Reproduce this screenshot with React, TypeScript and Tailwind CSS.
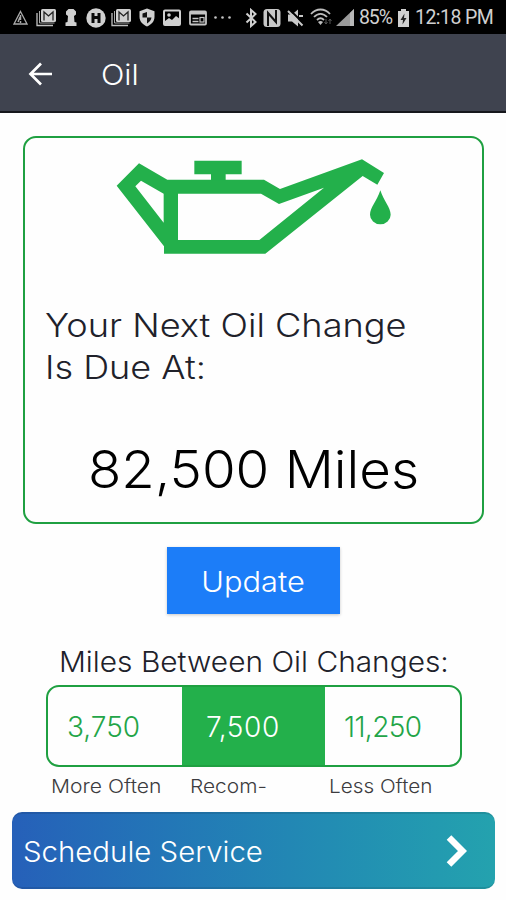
import type { ReactNode } from "react";

function StatusIcon({ width, className, children }: { width: number; className: string; children: ReactNode }) {
  return (
    <svg
      width={width}
      height="20"
      viewBox={`0 0 ${width} 20`}
      fill="none"
      stroke="none"
      className={`shrink-0 ${className}`}
      aria-hidden="true"
    >
      {children}
    </svg>
  );
}

function MailStack({ className }: { className: string }) {
  return (
    <StatusIcon width={20} className={className}>
      <path d="M1 5v12.5h16" stroke="#c0c0c0" strokeWidth="1.3" />
      <path d="M3.500 3v12h15" stroke="#a8a8a8" strokeWidth="1" />
      <rect x="5" y="1" width="15" height="13" rx="1.5" fill="#d0d0d0" />
      <path d="M8 12.500V4l4.500 4L17 4v8.500" stroke="#222" strokeWidth="1.3" />
    </StatusIcon>
  );
}

function StatusBar() {
  return (
    <div className="flex h-[34px] items-center bg-black pt-px text-[#d0d0d0]">
      <StatusIcon width={15} className="ml-[13px]">
        <path d="M7.5 3.5 14 16H1Z" stroke="#aaa" strokeWidth="1.3" />
        <path d="M7.5 7v5M7.5 13v2M5 14l2-5" stroke="#aaa" strokeWidth="1.5" />
      </StatusIcon>
      <MailStack className="ml-[8px]" />
      <StatusIcon width={12} className="ml-[9px]">
        <path d="M3.5 1h5L11 3.500V6.500L9 8l.5 6 2 .5V18H.5v-3.500l2-.5L3 8 1 6.500v-3Z" fill="#d0d0d0" />
      </StatusIcon>
      <StatusIcon width={20} className="ml-[9px]">
        <circle cx="10" cy="10" r="9.7" fill="#d0d0d0" />
        <path d="M7 5v10M13 5v10M7 9.5h6" stroke="#0a0a0a" strokeWidth="3" />
      </StatusIcon>
      <MailStack className="ml-[5px]" />
      <StatusIcon width={16} className="ml-[8px]">
        <path d="M8 .5l7.500 2.800v5.500c0 4.600-3.200 8-7.500 9.700C3.700 16.800.5 13.400.5 8.800V3.300Z" fill="#d0d0d0" />
        <path d="M8 4v5.5H3.500V5.5ZM8 9.5h4.500c-.5 3-2 4.500-4.500 6Z" fill="#111" />
      </StatusIcon>
      <StatusIcon width={18} className="ml-[8px]">
        <rect x="1" y="2.5" width="16" height="14.5" rx="1" stroke="#d0d0d0" strokeWidth="2" />
        <path d="M2 13l4-3 3 2 4-4 4 3v6H2Z" fill="#d0d0d0" />
        <circle cx="6" cy="7" r="1.8" fill="#d0d0d0" />
      </StatusIcon>
      <StatusIcon width={18} className="ml-[8px]">
        <rect x="1" y="3.5" width="16" height="13" rx="1" stroke="#c4c4c4" strokeWidth="1.8" />
        <path d="M1 5h16" stroke="#c4c4c4" strokeWidth="3" />
        <path d="M3.5 10.5h6M3.5 13.5h6" stroke="#c4c4c4" strokeWidth="1.4" />
        <rect x="11" y="9.5" width="4" height="4.5" stroke="#c4c4c4" strokeWidth="1.2" />
      </StatusIcon>
      <StatusIcon width={20} className="ml-[6px]">
        <circle cx="2.5" cy="9.5" r="1.3" fill="#c4c4c4" />
        <circle cx="9.5" cy="9.5" r="1.3" fill="#c4c4c4" />
        <circle cx="16.5" cy="9.5" r="1.3" fill="#c4c4c4" />
      </StatusIcon>
      <StatusIcon width={12} className="ml-[12px]">
        <path d="M1.5 5.5l9 8.5L6 18V2l4.500 4-9 8.500" stroke="#d0d0d0" strokeWidth="2" />
      </StatusIcon>
      <StatusIcon width={18} className="ml-[6px]">
        <rect x="0.5" y="1" width="17" height="18" rx="3.5" fill="#c8c8c8" />
        <path d="M5 18V5l8 9V2" stroke="#111" strokeWidth="2" />
      </StatusIcon>
      <StatusIcon width={17} className="ml-[6px]">
        <path d="M1 6.5h4l6-5v17l-6-5H1Z" fill="#c8c8c8" />
        <path d="M2 1l15 15" stroke="#000" strokeWidth="2" />
        <path d="M1 3l14.500 14.500M12 8h4" stroke="#c8c8c8" strokeWidth="2" />
      </StatusIcon>
      <StatusIcon width={23} className="ml-[6px]">
        <path
          d="M1 6c5.500-6 13.500-6 19 0M4 9c4-4.300 9-4.300 13 0M7 12c2.500-2.500 4.500-2.500 7 0"
          stroke="#bdbdbd"
          strokeWidth="1.8"
        />
        <path d="M8 14q2.500-2 5 0l-2.500 3Z" fill="#bdbdbd" />
        <path d="M16 11v5M14.500 14l1.500 2 1.500-2M20 16v-5M18.500 13l1.500-2 1.500 2" stroke="#555" strokeWidth="1" />
      </StatusIcon>
      <StatusIcon width={19} className="ml-[3px]">
        <path d="M0 18 18 1v17Z" fill="#9a9a9a" />
        <path d="M14 5l4-4v17h-4Z" fill="#b8b8b8" />
      </StatusIcon>
      <span className="ml-[4px] w-[34px] shrink-0 font-[Roboto] text-[19.5px] leading-5 font-normal tracking-[-1.1px] whitespace-nowrap">
        85%
      </span>
      <StatusIcon width={13} className="ml-[4px]">
        <path d="M4 1h5v2h3v16H1V3h3Z" fill="#d0d0d0" />
        <path d="M7.5 5.5 3.5 12H6l-.5 4.500L9.5 10H7Z" fill="#222" />
      </StatusIcon>
      <span className="ml-[5px] shrink-0 font-[Roboto] text-[19.5px] leading-5 font-normal tracking-[-0.55px] whitespace-nowrap">
        12:18 PM
      </span>
    </div>
  );
}

function OilCan() {
  return (
    <svg width="310" height="125" viewBox="0 0 930 375" fill="#23b04b" aria-hidden="true">
      <path
        fillRule="evenodd"
        d="M50 122 117 55 202 104H492L540 132 786 43 852 84 832 119 788 93 496 326H192V304ZM106 124 191 233V146L123 107ZM234 146V285H478L672 128 537 177 483 146Z"
      />
      <path d="M283 47H425V88H377V106H333V88H283Z" />
      <path d="M841 136C831 168 810 188 810 209A31 29 0 0 0 872 209C872 188 851 168 841 136Z" />
    </svg>
  );
}

const intervals = [
  { miles: "3,750", cell: "w-[134px] pl-[19px] text-[#23a548]", text: "tracking-normal" },
  { miles: "7,500", cell: "w-[143px] bg-[#23b04b] pl-[24px] text-white", text: "tracking-[0.6px]" },
  { miles: "11,250", cell: "grow pl-[19px] text-[#23a548]", text: "tracking-[-0.6px]" },
];

export default function App() {
  return (
    <div className="h-[900px] w-[506px] overflow-hidden bg-[#fefefe] font-[Inter,sans-serif] font-light text-[#20212a]">
      <StatusBar />
      <header className="flex h-[79px] items-center border-b-2 border-[#16171c] bg-[#3f434f] pt-[2px] pl-[28px] text-white">
        <svg width="24" height="24" viewBox="0 0 24 24" fill="none" stroke="#fff" strokeWidth="2.7" aria-hidden="true">
          <path d="M24 12H2M13 1.5 2.5 12 13 22.5" />
        </svg>
        <h1 className="ml-[49px] origin-left scale-x-[1.1] pt-[2px] text-[28px] leading-8">Oil</h1>
      </header>

      <main className="flex flex-col">
        <section className="mt-[23px] ml-[23px] flex h-[388px] w-[461px] flex-col rounded-[13px] border-2 border-[#1fa041]">
          <div className="mt-[7px] ml-[75px] h-[125px]">
            <OilCan />
          </div>
          <p className="mt-[35px] ml-[20px] text-[32px] leading-[42px] whitespace-nowrap">
            <span className="block origin-left scale-x-[1.13]">Your Next Oil Change</span>
            <span className="block origin-left scale-x-[1.125]">Is Due At:</span>
          </p>
          <p className="mt-[48px] ml-[63px] origin-left scale-x-[1.06] text-[51.5px] leading-[64px] whitespace-nowrap text-black">
            82,500 Miles
          </p>
        </section>

        <button className="mt-[23px] ml-[167px] h-[67px] w-[173px] bg-[#1c7df8] pt-[3px] text-[28px] leading-8 text-white shadow-[0_1px_3px_rgba(0,0,0,0.22)]">
          <span className="inline-block scale-x-[1.1]">Update</span>
        </button>

        <h2 className="mt-[32px] ml-[59px] origin-left scale-x-[1.066] text-[28px] leading-8 whitespace-nowrap">
          Miles Between Oil Changes:
        </h2>
        <div className="mt-[7px] ml-[46px] flex h-[82px] w-[416px] overflow-hidden rounded-[13px] border-2 border-[#1fa041]">
          {intervals.map(({ miles, cell, text }) => (
            <div key={miles} className={`flex items-center pt-[2px] text-[28px] leading-8 ${cell}`}>
              <span className={text}>{miles}</span>
            </div>
          ))}
        </div>
        <div className="mt-[8px] ml-[51px] flex text-[19px] leading-6 whitespace-nowrap text-[#3c3c40]">
          <span className="w-[139px] origin-left scale-x-[1.11]">More Often</span>
          <span className="w-[139px] origin-left scale-x-[1.1]">Recom-</span>
          <span className="origin-left scale-x-[1.09]">Less Often</span>
        </div>

        <button className="mt-[13px] ml-[12px] flex h-[77px] w-[483px] items-center justify-between rounded-[10px] border-y-2 border-black/10 bg-linear-to-r from-[#2660b9] to-[#24a2ae] pr-[28px] pl-[11px] text-[28px] leading-8 text-white">
          <span className="origin-left scale-x-[1.05] pt-[2px]">Schedule Service</span>
          <svg width="21" height="34" viewBox="0 0 21 34" fill="none" stroke="#fff" strokeWidth="6.5" aria-hidden="true">
            <path d="M3 3.5 16.500 17 3 30.500" />
          </svg>
        </button>
      </main>
    </div>
  );
}
